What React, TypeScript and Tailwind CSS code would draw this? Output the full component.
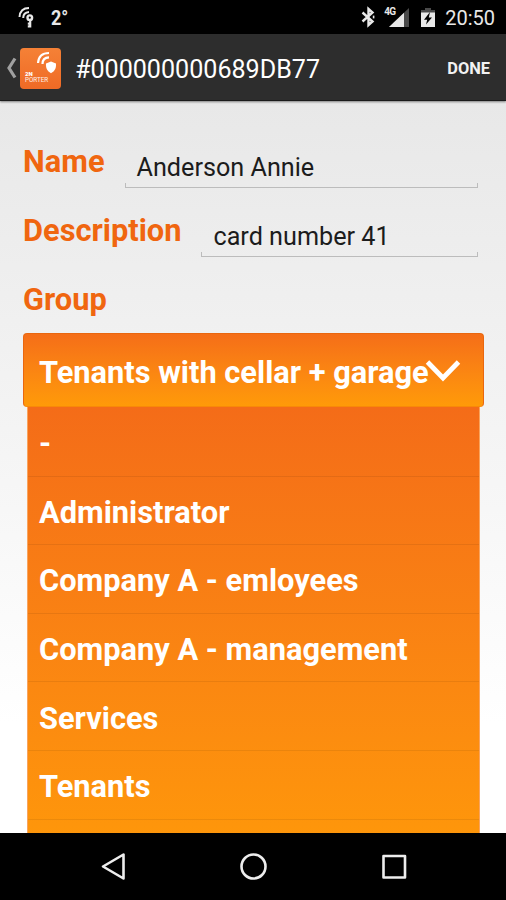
const groups = [
  "-",
  "Administrator",
  "Company A - emloyees",
  "Company A - management",
  "Services",
  "Tenants",
];

function StatusBar() {
  return (
    <div className="flex h-[34px] shrink-0 items-center bg-black pl-[17px] pr-[11px] text-[#e8e8e8]">
      <svg width="18" height="24" viewBox="0 0 18 24" fill="none" stroke="currentColor">
        <path d="M2.5 12 C3 5.5 6 3 12 3" strokeWidth="2" />
        <path d="M6.2 13 C6.2 9.5 8 7.3 12 7" strokeWidth="2" />
        <circle cx="12.8" cy="12.7" r="2.3" strokeWidth="2.4" />
        <path d="M13.2 15 V22.5 M10.8 18.6 H13 M10.8 21.4 H13" strokeWidth="2.2" />
      </svg>
      <span className="ml-4 inline-block origin-left scale-x-90 pt-[2px] text-[20px] font-bold">2°</span>
      <div className="ml-auto flex items-center">
        <svg width="14" height="22" viewBox="0 0 14 22" fill="none" stroke="currentColor" strokeWidth="2.4">
          <path d="M1.5 6.5 L11.5 15.5 L7.5 19 V3 L11.5 6.5 L1.5 15.5" />
          <path d="M12.6 9.6 V12.4" strokeWidth="1.6" />
        </svg>
        <div className="relative ml-[10px] h-[22px] w-[24px]">
          <svg width="24" height="22" viewBox="0 0 24 22">
            <path d="M24 2 V21 H4 Z" fill="#4a4a4a" />
            <path d="M19 6.7 V21 H4 Z" fill="currentColor" />
          </svg>
          <span className="absolute -left-[1px] top-[1px] text-[10px] font-bold leading-none tracking-[-0.7px]">4G</span>
        </div>
        <svg className="ml-3" width="14" height="22" viewBox="0 0 14 22">
          <path d="M4 2 H10 V4 H14 V8 H0 V4 H4 Z" fill="#4a4a4a" />
          <path d="M0 6.5 H14 V21 H0 Z" fill="currentColor" />
          <path d="M9 6 L3 13.8 H6.2 L5 18.5 L11 11.6 H7.8 Z" fill="#000" />
        </svg>
        <span className="ml-[10px] pt-[2px] text-[20px]">20:50</span>
      </div>
    </div>
  );
}

function ActionBar() {
  return (
    <div className="z-10 flex h-[67px] shrink-0 items-center border-b border-[#1b1b1b] bg-[#2d2d2d] pl-[6px] pr-4 text-white shadow-[0_1px_2px_rgba(0,0,0,0.45)]">
      <svg className="mt-[2px]" width="11" height="22" viewBox="0 0 11 22" fill="none" stroke="#a0a0a0" strokeWidth="3.2">
        <path d="M9 1.5 L3 11 L9 20.5" />
      </svg>
      <div className="relative ml-[3px] mt-[2px] h-[41px] w-[41px] rounded-[4px] bg-gradient-to-b from-[#f58136] to-[#ef6a25]">
        <svg width="41" height="41" viewBox="0 0 41 41" fill="none" stroke="#fff" strokeWidth="2.2">
          <path d="M18 15 C18.5 8.5 22 5 29 5" />
          <path d="M22.5 16 C22.5 12 25 9.6 29 9.4" />
          <path d="M31 13.5 L36 15.5 C36.3 20 35 23 31 25.2 C27 23 25.7 20 26 15.5 Z" fill="#fff" stroke="none" />
        </svg>
        <span className="absolute left-[5px] top-[23px] text-[6px] font-black leading-none">2N</span>
        <span className="absolute left-[5px] top-[29.5px] text-[6.3px] leading-none text-white/90">PORTER</span>
      </div>
      <h1 className="ml-[14px] pt-[6px] text-[25.1px]">#000000000689DB77</h1>
      <button className="ml-auto pt-[5px] text-[16.4px] font-bold text-[#f2f2f2]">DONE</button>
    </div>
  );
}

function Field({ label, value }: { label: string; value: string }) {
  return (
    <div className="flex h-[69px] items-start">
      <label className="text-[30.8px] font-bold leading-[38px] text-[#f0660f]">{label}</label>
      <div className="ml-5 mt-[6px] flex-1">
        <div className="pl-3 text-[25.2px] leading-[37px] text-[#1c1c1c]">{value}</div>
        <div className="-mt-[3px] h-[5px] border-x border-b border-[#bcbcbc]"></div>
      </div>
    </div>
  );
}

export default function App() {
  return (
    <div className="flex h-[900px] w-[506px] flex-col overflow-hidden font-['Roboto',sans-serif]">
      <StatusBar />
      <ActionBar />

      {/* Card form */}
      <div className="flex-1 overflow-hidden bg-gradient-to-b from-[#e8e8e8] via-[#f0f0f0] via-30% to-white to-85% pt-[42px]">
        <div className="pl-[23px] pr-7">
          <Field label="Name" value="Anderson Annie" />
          <Field label="Description" value="card number 41" />
          <div className="h-[52px] text-[30.8px] font-bold leading-[38px] text-[#f0660f]">Group</div>
        </div>

        {/* Group select */}
        <div className="ml-[23px] w-[461px]">
          <div className="flex h-[74px] items-center rounded-[4px] border border-[#e9670f] border-b-[#f98908] bg-gradient-to-b from-[#f56e18] to-[#ff9a08] pl-[15px] pt-[6px] text-white">
            <span className="whitespace-nowrap text-[30.8px] font-bold">Tenants with cellar + garage</span>
            <svg className="-ml-[4px] -mt-1 shrink-0" width="36" height="24" viewBox="0 0 36 24" fill="none" stroke="#fff" strokeWidth="4.8">
              <path d="M2.5 3 L18 19 L33.5 3" />
            </svg>
          </div>
          <ul className="mx-1 h-[470px] border-x border-[#f9a45e] bg-gradient-to-b from-[#f46c18] to-[#ff9a08] pt-px text-white">
            {groups.map((group) => (
              <li key={group} className="flex h-[68.6px] items-center border-b border-black/7 pl-[11px] pt-[5px] text-[30.8px] font-bold">
                {group}
              </li>
            ))}
          </ul>
        </div>
      </div>

      {/* Navigation bar */}
      <div className="flex h-[67px] shrink-0 items-center bg-black">
        <svg width="506" height="67" viewBox="0 0 506 67" fill="none" stroke="#ededed" strokeWidth="2.6" strokeLinejoin="round">
          <path d="M123.5 21.5 V45.5 L103 33.5 Z" />
          <circle cx="253.5" cy="33.5" r="12" />
          <rect x="383.5" y="23" width="21.5" height="21.5" />
        </svg>
      </div>
    </div>
  );
}
